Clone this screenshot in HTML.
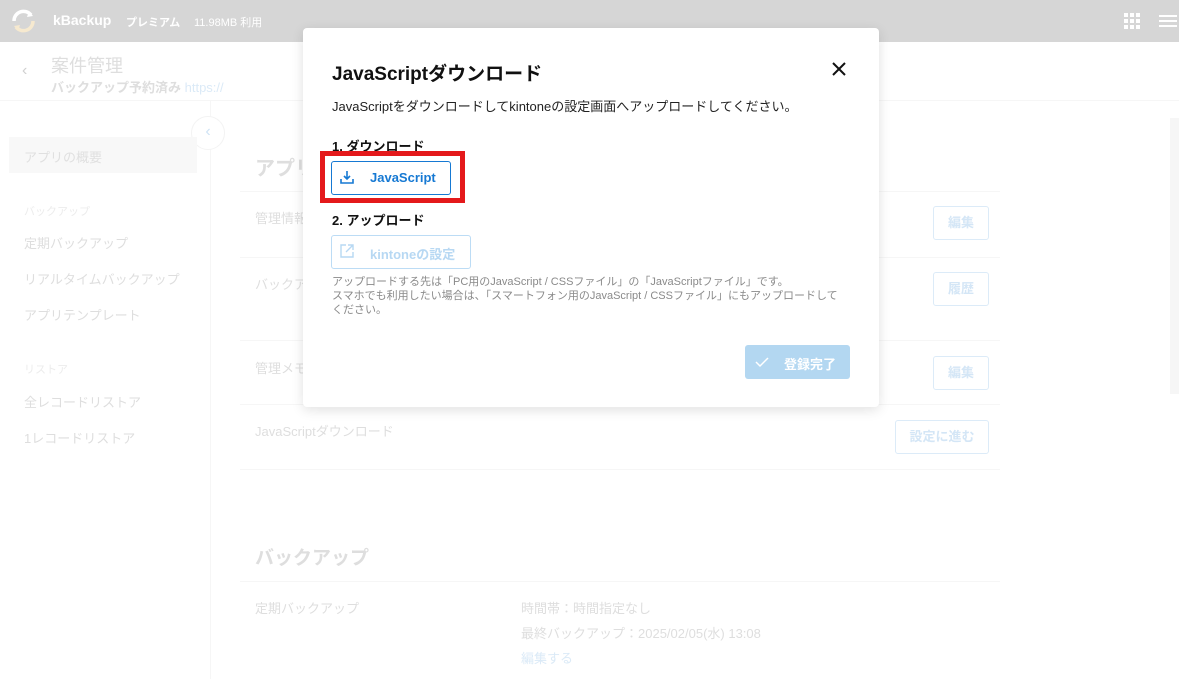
<!DOCTYPE html>
<html><head><meta charset="utf-8"><style>
*{margin:0;padding:0;box-sizing:border-box}
body{width:1179px;height:679px;overflow:hidden;background:#fff;font-family:"Liberation Sans","Noto Sans CJK JP",sans-serif;position:relative}
.a{position:absolute;white-space:nowrap}
.hd{position:absolute;left:0;top:0;width:1179px;height:42px;background:#d6d6d6}
.g{color:#dedede}
.line{position:absolute;height:1px;background:#f6f6f6}
.ob{position:absolute;border:1px solid #dcebf8;border-radius:3px;color:#d4e6f6;font-size:13px;font-weight:bold;text-align:center}
.modal{position:absolute;left:303px;top:28px;width:576px;height:379px;background:#fff;border-radius:4px;box-shadow:0 3px 12px rgba(0,0,0,.12)}
</style></head><body>
<div class="hd"></div>
<svg class="a" style="left:10px;top:9px" width="27" height="24" viewBox="0 0 27 24"><path d="M4 12a9.5 9.5 0 0 1 17-6" stroke="#fff" stroke-width="3.5" fill="none"/><path d="M23 12a9.5 9.5 0 0 1-17 6" stroke="#f6e9cf" stroke-width="3.5" fill="none"/><path d="M19 2l4 5-6 1z" fill="#fff"/><path d="M8 22l-4-5 6-1z" fill="#f6e9cf"/></svg>
<div class="a" style="left:53px;top:12px;color:#fff;font-size:14px;font-weight:bold">kBackup</div>
<div class="a" style="left:126px;top:14px;color:#fff;font-size:11px;font-weight:bold">プレミアム</div>
<div class="a" style="left:194px;top:14px;color:#fff;font-size:11px">11.98MB 利用</div>
<svg class="a" style="left:1124px;top:13px" width="16" height="16"><g fill="#fff"><rect x="0" y="0" width="4" height="4"/><rect x="6" y="0" width="4" height="4"/><rect x="12" y="0" width="4" height="4"/><rect x="0" y="6" width="4" height="4"/><rect x="6" y="6" width="4" height="4"/><rect x="12" y="6" width="4" height="4"/><rect x="0" y="12" width="4" height="4"/><rect x="6" y="12" width="4" height="4"/><rect x="12" y="12" width="4" height="4"/></g></svg>
<svg class="a" style="left:1159px;top:15px" width="18" height="12"><g stroke="#fff" stroke-width="2"><line x1="0" y1="1" x2="18" y2="1"/><line x1="0" y1="6" x2="18" y2="6"/><line x1="0" y1="11" x2="18" y2="11"/></g></svg>
<div class="a" style="left:22px;top:62px;color:#d0d0d0;font-size:16px">‹</div>
<div class="a g" style="left:51px;top:52px;font-size:18px">案件管理</div>
<div class="a g" style="left:51px;top:77px;font-size:13px;font-weight:bold">バックアップ予約済み <span style="color:#dbeaf7;font-weight:normal">https://</span></div>
<div class="line" style="left:0;top:100px;width:1179px"></div>
<div class="a" style="left:210px;top:100px;width:1px;height:579px;background:#f6f6f6"></div>
<div class="a" style="left:191px;top:116px;width:34px;height:34px;border-radius:50%;border:1px solid #f3f3f3;background:#fff;color:#cfe3f5;font-size:16px;text-align:center;line-height:30px">‹</div>
<div class="a" style="left:9px;top:137px;width:188px;height:36px;background:#f8f8f8"></div>
<div class="a" style="left:24px;top:147px;font-size:13px;color:#e0e0e0">アプリの概要</div>
<div class="a" style="left:24px;top:203px;font-size:11px;color:#ececec">バックアップ</div>
<div class="a g" style="left:24px;top:233px;font-size:13px">定期バックアップ</div>
<div class="a g" style="left:24px;top:269px;font-size:13px">リアルタイムバックアップ</div>
<div class="a g" style="left:24px;top:305px;font-size:13px">アプリテンプレート</div>
<div class="a" style="left:24px;top:361px;font-size:11px;color:#ececec">リストア</div>
<div class="a g" style="left:24px;top:392px;font-size:13px">全レコードリストア</div>
<div class="a g" style="left:24px;top:428px;font-size:13px">1レコードリストア</div>
<div class="a g" style="left:255px;top:152px;font-size:20px;font-weight:bold">アプリ</div>
<div class="line" style="left:240px;top:191px;width:760px"></div>
<div class="a g" style="left:255px;top:208px;font-size:13px">管理情報</div>
<div class="line" style="left:240px;top:257px;width:760px"></div>
<div class="a g" style="left:255px;top:274px;font-size:13px">バックア</div>
<div class="line" style="left:240px;top:340px;width:760px"></div>
<div class="a g" style="left:255px;top:358px;font-size:13px">管理メモ</div>
<div class="line" style="left:240px;top:404px;width:760px"></div>
<div class="ob" style="left:933px;top:206px;width:56px;height:34px;line-height:32px">編集</div>
<div class="ob" style="left:933px;top:272px;width:56px;height:34px;line-height:32px">履歴</div>
<div class="ob" style="left:933px;top:356px;width:56px;height:34px;line-height:32px">編集</div>
<div class="ob" style="left:895px;top:420px;width:94px;height:34px;line-height:32px">設定に進む</div>
<div class="a g" style="left:255px;top:421px;font-size:13px">JavaScriptダウンロード</div>
<div class="line" style="left:240px;top:469px;width:760px"></div>
<div class="a g" style="left:255px;top:543px;font-size:19px;font-weight:bold">バックアップ</div>
<div class="line" style="left:240px;top:581px;width:760px"></div>
<div class="a g" style="left:255px;top:598px;font-size:13px">定期バックアップ</div>
<div class="a g" style="left:521px;top:598px;font-size:13px">時間帯：時間指定なし</div>
<div class="a g" style="left:521px;top:623px;font-size:13px">最終バックアップ：2025/02/05(水) 13:08</div>
<div class="a" style="left:521px;top:648px;font-size:13px;color:#dbeaf7">編集する</div>
<div class="a" style="left:1170px;top:118px;width:9px;height:276px;background:#f6f6f6"></div>

<div class="modal">
<div class="a" style="left:29px;top:31px;font-size:19px;font-weight:bold;color:#111">JavaScriptダウンロード</div>
<svg class="a" style="left:529px;top:34px" width="14" height="14"><path d="M1 1L13 13M13 1L1 13" stroke="#111" stroke-width="2"/></svg>
<div class="a" style="left:29px;top:68px;font-size:13px;color:#222">JavaScriptをダウンロードしてkintoneの設定画面へアップロードしてください。</div>
<div class="a" style="left:29px;top:108px;font-size:13px;font-weight:bold;color:#111">1. ダウンロード</div>
<div class="a" style="left:17px;top:123px;width:145px;height:52px;border:5px solid #e4191b"></div>
<div class="a" style="left:28px;top:133px;width:120px;height:34px;border:1px solid #1679d3;border-radius:3px"></div>
<svg class="a" style="left:37px;top:142px" width="14" height="14"><path d="M7 1v8M4 6l3 3 3-3M1 9v4h12V9" stroke="#1679d3" stroke-width="1.6" fill="none"/></svg>
<div class="a" style="left:67px;top:142px;font-size:13px;font-weight:bold;color:#1679d3">JavaScript</div>
<div class="a" style="left:29px;top:182px;font-size:13px;font-weight:bold;color:#111">2. アップロード</div>
<div class="a" style="left:28px;top:207px;width:140px;height:34px;border:1px solid #bcdcf5;border-radius:3px"></div>
<svg class="a" style="left:37px;top:216px" width="14" height="14"><path d="M6 1H1v12h12V8M8 1h5v5M13 1L6 8" stroke="#b7d8f3" stroke-width="1.4" fill="none"/></svg>
<div class="a" style="left:67px;top:216px;font-size:13px;font-weight:bold;color:#b7d8f3">kintoneの設定</div>
<div class="a" style="left:29px;top:247px;font-size:11px;line-height:14px;color:#8a8a8a;white-space:normal;width:512px">アップロードする先は「PC用のJavaScript / CSSファイル」の「JavaScriptファイル」です。<br>スマホでも利用したい場合は、「スマートフォン用のJavaScript / CSSファイル」にもアップロードしてください。</div>
<div class="a" style="left:442px;top:317px;width:105px;height:34px;background:#b3d7f1;border-radius:3px"></div>
<svg class="a" style="left:452px;top:328px" width="14" height="12"><path d="M1 6l4 4 8-8" stroke="#fff" stroke-width="1.5" fill="none"/></svg>
<div class="a" style="left:481px;top:326px;font-size:13px;font-weight:bold;color:#fff">登録完了</div>
</div>
</body></html>
